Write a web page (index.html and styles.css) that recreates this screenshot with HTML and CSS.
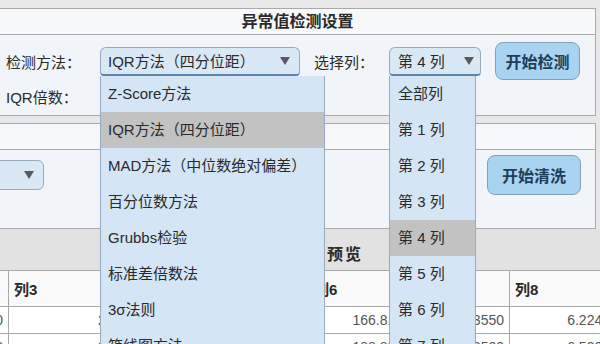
FILE: index.html
```html
<!DOCTYPE html>
<html lang="zh-CN">
<head>
    <meta charset="UTF-8">
    <meta name="viewport" content="width=device-width, initial-scale=1.0">
    <title>异常值检测与数据清洗</title>
    <link rel="stylesheet" href="styles.css">
</head>
<body>
    <div class="page">
        <section class="panel panel-detect">
            <div class="panel-head">异常值检测设置</div>
            <div class="panel-body">
                <div class="row">
                    <label class="field-label">检测方法：</label>
                    <div class="select-wrap method">
                        <div class="select open">
                            <span>IQR方法（四分位距）</span>
                            <i class="arrow"></i>
                        </div>
                        <ul class="dropdown">
                            <li>Z-Score方法</li>
                            <li class="selected">IQR方法（四分位距）</li>
                            <li>MAD方法（中位数绝对偏差）</li>
                            <li>百分位数方法</li>
                            <li>Grubbs检验</li>
                            <li>标准差倍数法</li>
                            <li>3σ法则</li>
                            <li>箱线图方法</li>
                        </ul>
                    </div>
                    <label class="field-label col-label">选择列：</label>
                    <div class="select-wrap column">
                        <div class="select open">
                            <span>第 4 列</span>
                            <i class="arrow"></i>
                        </div>
                        <ul class="dropdown">
                            <li>全部列</li>
                            <li>第 1 列</li>
                            <li>第 2 列</li>
                            <li>第 3 列</li>
                            <li class="selected">第 4 列</li>
                            <li>第 5 列</li>
                            <li>第 6 列</li>
                            <li>第 7 列</li>
                        </ul>
                    </div>
                    <button class="btn">开始检测</button>
                </div>
                <div class="row row-second">
                    <label class="field-label">IQR倍数：</label>
                </div>
            </div>
        </section>

        <section class="panel panel-clean">
            <div class="panel-head"></div>
            <div class="panel-body">
                <div class="row">
                    <div class="select clean-select">
                        <i class="arrow"></i>
                    </div>
                    <button class="btn btn-clean">开始清洗</button>
                </div>
            </div>
        </section>

        <section class="preview">
            <div class="preview-head">清洗后数据预览</div>
            <div class="table-wrap">
                <table class="data-table">
                    <colgroup>
                        <col class="c-2">
                        <col class="c-3">
                        <col class="c-4">
                        <col class="c-5">
                        <col class="c-6">
                        <col class="c-7">
                        <col class="c-8">
                    </colgroup>
                    <thead>
                        <tr>
                            <th>列2</th><th>列3</th><th>列4</th><th>列5</th><th>列6</th><th>列7</th><th>列8</th>
                        </tr>
                    </thead>
                    <tbody>
                        <tr>
                            <td>12.4500</td><td>25.31</td><td>78.12</td><td>33.64</td><td>166.813</td><td>45.3550</td><td>6.2240</td>
                        </tr>
                        <tr>
                            <td>13.2200</td><td>24.88</td><td>80.05</td><td>31.97</td><td>188.833</td><td>47.2500</td><td>6.5300</td>
                        </tr>
                    </tbody>
                </table>
            </div>
        </section>
    </div>
</body>
</html>
```

FILE: styles.css
```css
* {
    margin: 0;
    padding: 0;
    box-sizing: border-box;
}

body {
    font-family: "Liberation Sans", "Noto Sans CJK SC", sans-serif;
    font-size: 15px;
    color: #2a2a2a;
    background: #e8e8e8;
    overflow: hidden;
}

.page {
    padding-top: 8px;
}

.panel {
    width: 596px;
    border: 1px solid #a9a9a9;
    border-left: none;
    background: #f1f5f9;
}

.panel-head {
    height: 26px;
    line-height: 25px;
    text-align: center;
    font-size: 16px;
    font-weight: bold;
    background: #f6f8fa;
    border-bottom: 1px solid #a9a9a9;
}

.panel-detect .panel-body {
    height: 80px;
    padding: 7px 0 0 6px;
}

.panel-clean {
    margin-top: 7px;
}

.panel-clean .panel-body {
    height: 78px;
    padding-top: 6px;
}

.row {
    display: flex;
    align-items: center;
    height: 38px;
}

.row-second {
    height: 28px;
    margin-top: 2px;
}

.field-label {
    width: 94px;
    white-space: nowrap;
}

.col-label {
    width: 75px;
    margin-left: 14px;
}

.select-wrap {
    position: relative;
    z-index: 10;
}

.select {
    display: flex;
    align-items: center;
    justify-content: space-between;
    height: 29px;
    padding: 0 9px 0 7px;
    background: #d9e8f5;
    border: 1px solid #98aabb;
    border-radius: 6px;
    white-space: nowrap;
}

.select.open {
    border-bottom: 2px solid #5b86ad;
    border-radius: 6px 6px 4px 4px;
}

.method .select {
    width: 200px;
}

.column .select {
    width: 92px;
    padding: 0 6px 0 8px;
}

.arrow {
    width: 0;
    height: 0;
    border-left: 5px solid transparent;
    border-right: 5px solid transparent;
    border-top: 8px solid #585c60;
}

.dropdown {
    position: absolute;
    top: 100%;
    left: 0;
    list-style: none;
    background: #d4e6f5;
    border: 1px solid #97acc0;
    border-top: none;
}

.method .dropdown {
    width: 225px;
}

.column .dropdown {
    width: 87px;
}

.dropdown li {
    height: 36px;
    line-height: 36px;
    padding-left: 7px;
    white-space: nowrap;
}

.column .dropdown li {
    padding-left: 8px;
}

.dropdown li.selected {
    background: #c2c2c2;
}

.btn {
    width: 85px;
    height: 38px;
    margin-left: 14px;
    font-family: inherit;
    font-size: 16px;
    font-weight: bold;
    color: #1e3d58;
    background: #a8d4f1;
    border: 1px solid #7ea3bc;
    border-radius: 8px;
}

.btn-clean {
    width: 94px;
    height: 40px;
    margin-left: auto;
    margin-right: 14px;
}

.clean-select {
    width: 64px;
    height: 30px;
    margin-left: -20px;
    justify-content: flex-end;
}

.preview {
    background: #e2e2e2;
}

.preview-head {
    height: 41px;
    padding-top: 16px;
    line-height: 20px;
    text-align: center;
    font-size: 16px;
    font-weight: bold;
    letter-spacing: 2px;
}

.table-wrap {
    overflow: hidden;
}

.data-table {
    width: 707px;
    margin-left: -92px;
    border-collapse: collapse;
    table-layout: fixed;
    background: #fff;
}

.c-2 { width: 100px; }
.c-3 { width: 130px; }
.c-4 { width: 85px; }
.c-5 { width: 85px; }
.c-6 { width: 100px; }
.c-7 { width: 101px; }
.c-8 { width: 106px; }

.data-table th,
.data-table td {
    border: 1px solid #a8a8a8;
    white-space: nowrap;
    overflow: hidden;
}

.data-table th {
    height: 36px;
    padding-left: 5px;
    text-align: left;
    font-size: 15px;
    background: #fafafa;
}

.data-table td {
    height: 27px;
    padding-right: 5px;
    text-align: right;
    font-size: 14px;
    color: #555;
}
```
